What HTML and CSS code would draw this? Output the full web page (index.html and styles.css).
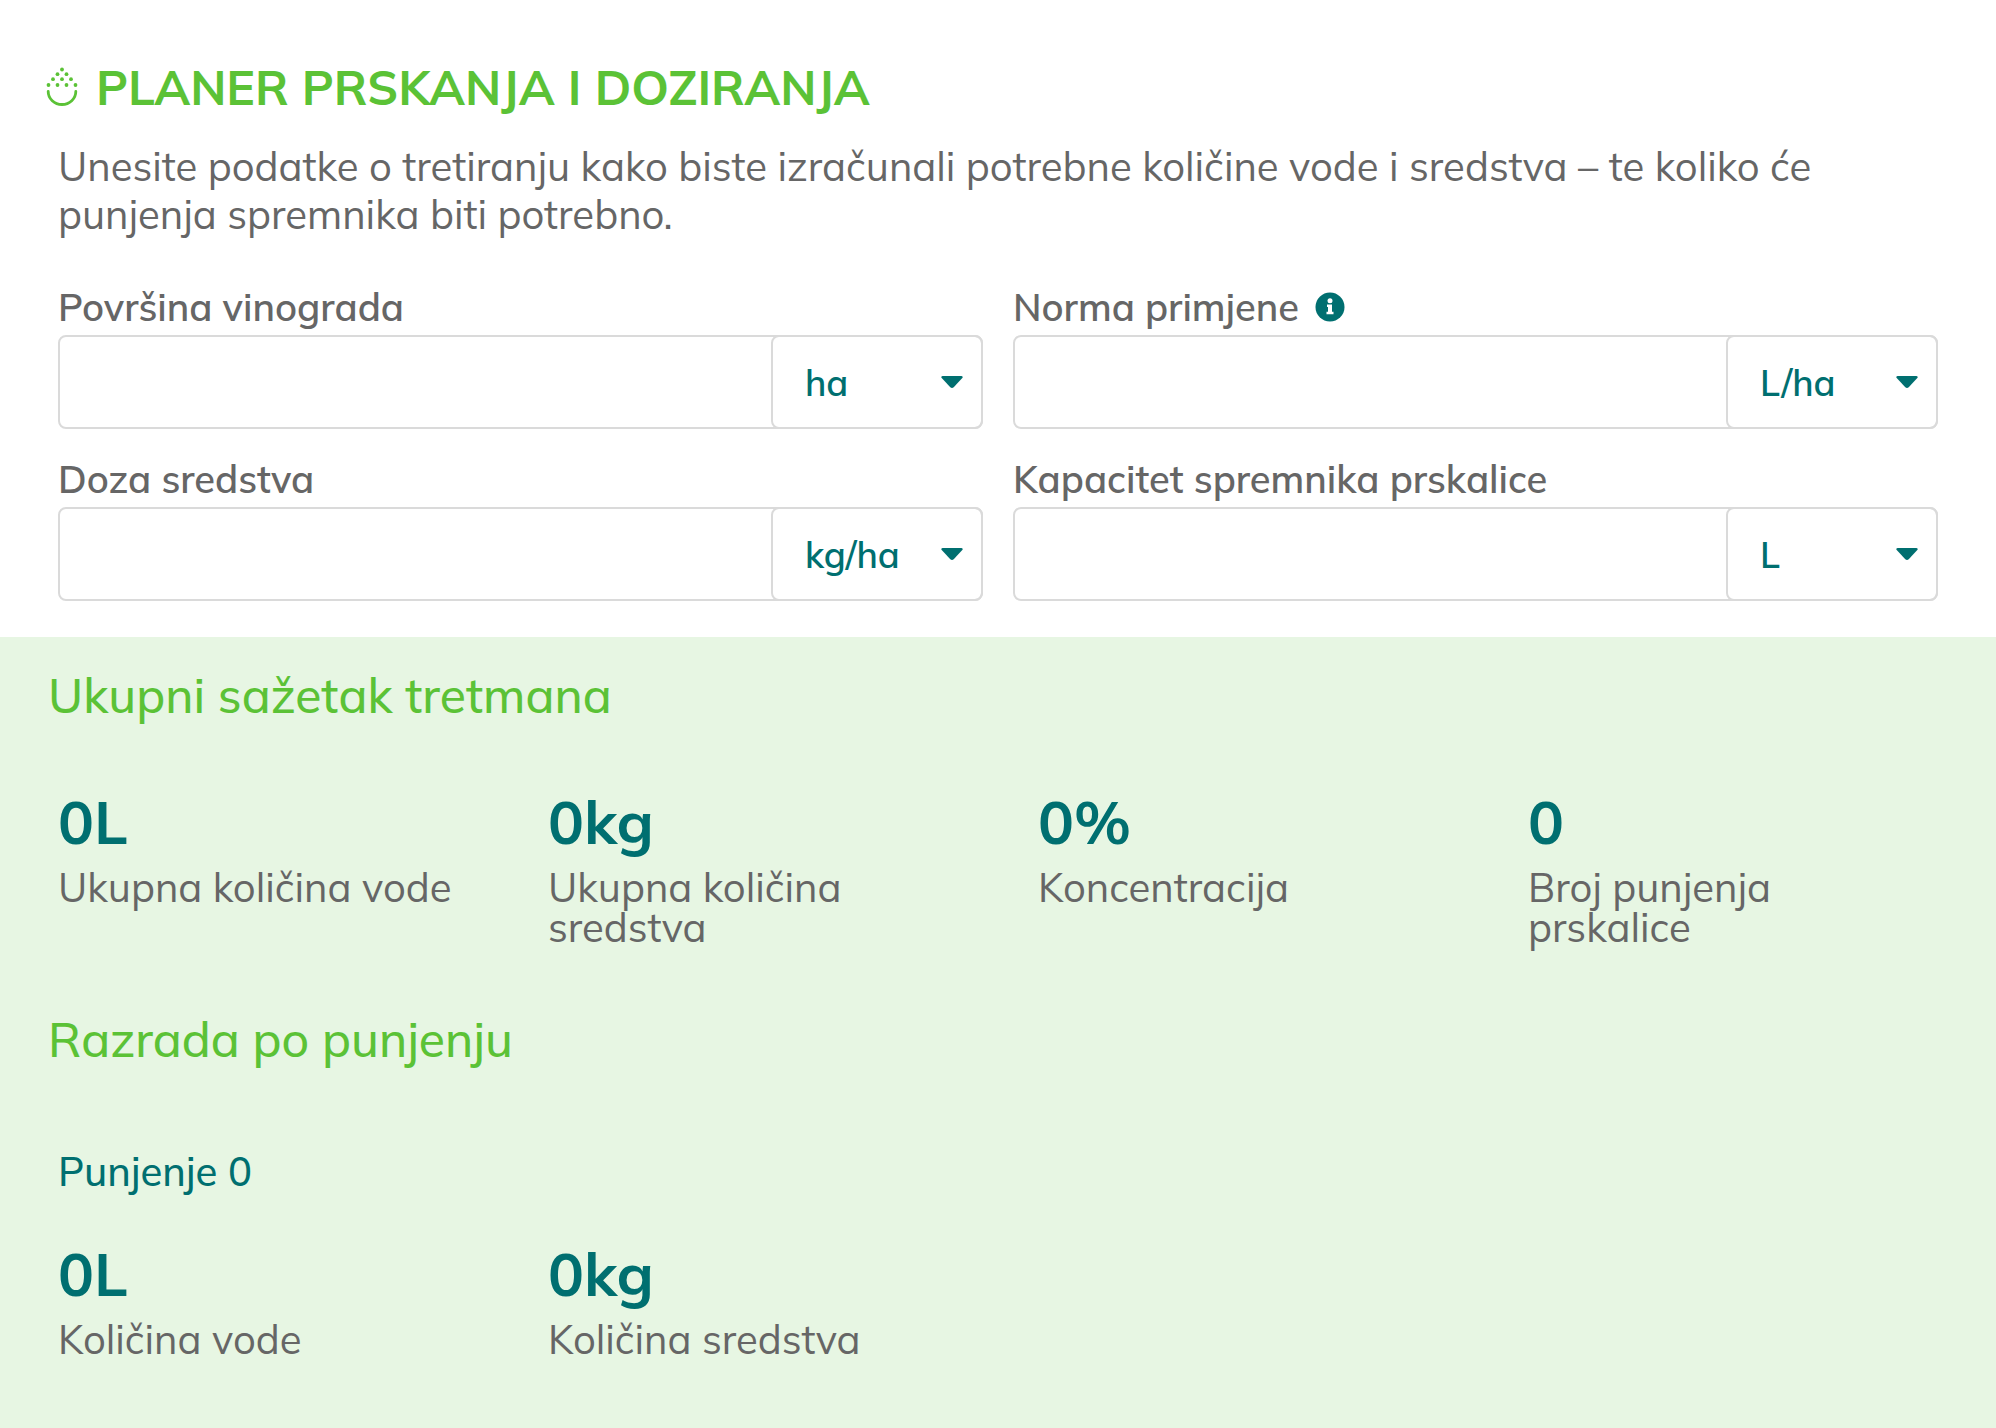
FILE: index.html
```html
<!DOCTYPE html>
<html lang="hr">
<head>
<meta charset="utf-8">
<meta name="viewport" content="width=device-width, initial-scale=1">
<title>Planer prskanja i doziranja</title>
<link rel="stylesheet" href="styles.css">
</head>
<body>
<main class="planner">
  <form class="setup">
    <h1 class="title">
      <svg class="title-icon" viewBox="0 0 32 40" aria-hidden="true">
        <path d="M2.200 24.500a13.800 13 0 0 0 27.600 0" fill="none" stroke="currentColor" stroke-width="2.800" stroke-linecap="round"/>
        <g fill="currentColor">
          <circle cx="16" cy="2.500" r="1.900"/>
          <circle cx="11.500" cy="7.200" r="1.900"/><circle cx="20.500" cy="7.200" r="1.900"/>
          <circle cx="7" cy="12.200" r="1.900"/><circle cx="16" cy="12.200" r="1.900"/><circle cx="25" cy="12.200" r="1.900"/>
          <circle cx="2.500" cy="18" r="1.900"/><circle cx="11.500" cy="18" r="1.900"/><circle cx="20.500" cy="18" r="1.900"/><circle cx="29.500" cy="18" r="1.900"/>
        </g>
      </svg>
      <span>PLANER PRSKANJA I DOZIRANJA</span>
    </h1>
    <p class="intro">Unesite podatke o tretiranju kako biste izračunali potrebne količine vode i sredstva – te koliko će punjenja spremnika biti potrebno.</p>
    <div class="fields">
      <div class="field">
        <label class="label" for="area">Površina vinograda</label>
        <div class="control">
          <input class="value" id="area" type="text" inputmode="decimal">
          <div class="unit">
            <select class="unit-select" aria-label="Jedinica površine"><option>ha</option></select>
            <svg class="caret" viewBox="0 0 22 12" aria-hidden="true"><path d="M1.500 0h19q2 .500.800 2l-8.600 9.200q-1.700 1.400-3.400 0L.700 2Q-.500.500 1.500 0z" fill="currentColor"/></svg>
          </div>
        </div>
      </div>
      <div class="field">
        <div class="label-row">
          <label class="label" for="rate">Norma primjene</label>
          <button class="info" type="button" aria-label="Informacije">
            <svg viewBox="0 0 30 30" aria-hidden="true"><circle cx="15" cy="15" r="14.500" fill="currentColor"/><circle cx="15" cy="8.800" r="2.500" fill="#fff"/><path d="M12 12.500h5v7.200h1.500v2.600h-7v-2.600H13v-4.600h-1z" fill="#fff"/></svg>
          </button>
        </div>
        <div class="control">
          <input class="value" id="rate" type="text" inputmode="decimal">
          <div class="unit">
            <select class="unit-select" aria-label="Jedinica norme"><option>L/ha</option></select>
            <svg class="caret" viewBox="0 0 22 12" aria-hidden="true"><path d="M1.500 0h19q2 .500.800 2l-8.600 9.200q-1.700 1.400-3.400 0L.700 2Q-.500.500 1.500 0z" fill="currentColor"/></svg>
          </div>
        </div>
      </div>
      <div class="field">
        <label class="label" for="dose">Doza sredstva</label>
        <div class="control">
          <input class="value" id="dose" type="text" inputmode="decimal">
          <div class="unit">
            <select class="unit-select" aria-label="Jedinica doze"><option>kg/ha</option></select>
            <svg class="caret" viewBox="0 0 22 12" aria-hidden="true"><path d="M1.500 0h19q2 .500.800 2l-8.600 9.200q-1.700 1.400-3.400 0L.700 2Q-.500.500 1.500 0z" fill="currentColor"/></svg>
          </div>
        </div>
      </div>
      <div class="field">
        <label class="label" for="tank">Kapacitet spremnika prskalice</label>
        <div class="control">
          <input class="value" id="tank" type="text" inputmode="decimal">
          <div class="unit">
            <select class="unit-select" aria-label="Jedinica kapaciteta"><option>L</option></select>
            <svg class="caret" viewBox="0 0 22 12" aria-hidden="true"><path d="M1.500 0h19q2 .500.800 2l-8.600 9.200q-1.700 1.400-3.400 0L.700 2Q-.500.500 1.500 0z" fill="currentColor"/></svg>
          </div>
        </div>
      </div>
    </div>
  </form>
  <section class="results">
    <h2 class="heading">Ukupni sažetak tretmana</h2>
    <div class="stats">
      <div class="stat"><strong class="number">0L</strong><span class="caption">Ukupna količina vode</span></div>
      <div class="stat"><strong class="number">0kg</strong><span class="caption">Ukupna količina sredstva</span></div>
      <div class="stat"><strong class="number">0%</strong><span class="caption">Koncentracija</span></div>
      <div class="stat"><strong class="number">0</strong><span class="caption">Broj punjenja prskalice</span></div>
    </div>
    <h2 class="heading">Razrada po punjenju</h2>
    <h3 class="fill">Punjenje 0</h3>
    <div class="stats">
      <div class="stat"><strong class="number">0L</strong><span class="caption">Količina vode</span></div>
      <div class="stat"><strong class="number">0kg</strong><span class="caption">Količina sredstva</span></div>
    </div>
  </section>
</main>
</body>
</html>
```
FILE: styles.css
```css
:root {
  --green: #5bc236;
  --teal: #006f70;
  --grey: #666;
  --line: #dadada;
  --mint: #e7f6e3;
}

* { box-sizing: border-box; }

body {
  margin: 0;
  background: #fff;
  color: var(--grey);
  font-family: Mulish, "Open Sans", "Noto Sans", sans-serif;
}

h1, h2, h3, p { margin: 0; }

.planner {
  display: flex;
  flex-direction: column;
  min-height: 100vh;
}

.setup { padding: 55px 58px 36px; }

.title {
  display: flex;
  align-items: center;
  gap: 18px;
  margin-left: -12px;
  color: var(--green);
  font-size: 48px;
  line-height: 64px;
  font-weight: 700;
}

.title-icon {
  width: 32px;
  height: 40px;
}

.intro {
  margin-top: 23px;
  font-size: 40px;
  line-height: 48px;
}

.fields {
  display: grid;
  grid-template-columns: 1fr 1fr;
  gap: 22px 30px;
  margin-top: 41px;
}

.field {
  display: flex;
  flex-direction: column;
}

.label-row {
  display: flex;
  align-items: center;
  gap: 16px;
}

.label {
  font-size: 38px;
  line-height: 56px;
  font-weight: 600;
}

.info {
  display: flex;
  width: 30px;
  height: 30px;
  padding: 0;
  border: 0;
  background: none;
  color: var(--teal);
}

.control {
  display: flex;
  height: 94px;
  border: 2px solid var(--line);
  border-radius: 8px;
}

.value {
  flex: 1;
  min-width: 0;
  padding: 0 32px;
  border: 0;
  background: none;
  color: var(--teal);
  font: inherit;
  font-size: 36px;
}

.unit {
  display: grid;
  align-items: center;
  width: 212px;
  margin: -2px;
  border: 2px solid var(--line);
  border-radius: 8px;
}

.unit-select,
.caret { grid-area: 1 / 1; }

.unit-select {
  width: 100%;
  height: 100%;
  padding: 0 48px 0 32px;
  border: 0;
  appearance: none;
  background: none;
  color: var(--teal);
  font: inherit;
  font-size: 36px;
  font-weight: 600;
}

.caret {
  justify-self: end;
  width: 22px;
  height: 12px;
  margin-right: 18px;
  color: var(--teal);
  pointer-events: none;
}

.results {
  flex: 1;
  padding: 26px 18px 56px;
  background: var(--mint);
}

.heading {
  padding: 0 30px;
  color: var(--green);
  font-size: 48px;
  line-height: 64px;
  font-weight: 500;
}

.stats {
  display: grid;
  grid-template-columns: repeat(4, 1fr);
  margin: 60px 0;
}

.stat {
  display: flex;
  flex-direction: column;
  gap: 10px;
  padding: 0 40px;
}

.number {
  color: var(--teal);
  font-size: 60px;
  line-height: 70px;
  font-weight: 700;
}

.caption {
  font-size: 40px;
  line-height: 40px;
}

.fill {
  margin: 76px 40px 0;
  color: var(--teal);
  font-size: 40px;
  line-height: 48px;
  font-weight: 500;
}

.fill + .stats { margin: 44px 0 0; }
```
